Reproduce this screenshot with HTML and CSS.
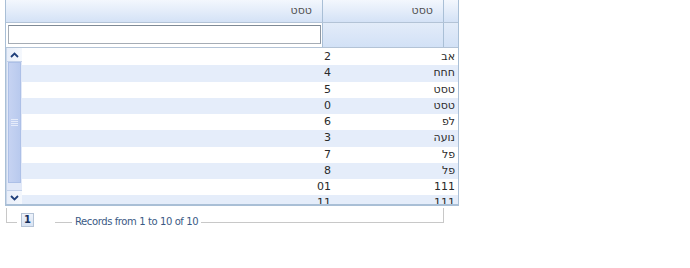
FILE: index.html
```html
<!DOCTYPE html>
<html lang="he">
<head>
    <meta charset="UTF-8">
    <title>טבלה</title>
    <link rel="stylesheet" href="styles.css">
</head>
<body>

<div class="grid" dir="rtl">
    <!-- כותרות -->
    <div class="hrow">
        <div class="hcell pad"></div>
        <div class="hcell c1">טסט</div>
        <div class="hcell c2">טסט</div>
    </div>
    <!-- שורת סינון -->
    <div class="frow">
        <div class="fcell pad"></div>
        <div class="fcell c1"></div>
        <div class="fcell c2"><input type="text" class="filter-input"></div>
    </div>

    <div class="grid-body">
        <div class="rows">
            <div class="row"><div class="cell c1">אב</div><div class="cell c2">2</div></div>
            <div class="row alt"><div class="cell c1">חחח</div><div class="cell c2">4</div></div>
            <div class="row"><div class="cell c1">טסט</div><div class="cell c2">5</div></div>
            <div class="row alt"><div class="cell c1">טסט</div><div class="cell c2">0</div></div>
            <div class="row"><div class="cell c1">לפ</div><div class="cell c2">6</div></div>
            <div class="row alt"><div class="cell c1">נועה</div><div class="cell c2">3</div></div>
            <div class="row"><div class="cell c1">פל</div><div class="cell c2">7</div></div>
            <div class="row alt"><div class="cell c1">פל</div><div class="cell c2">8</div></div>
            <div class="row"><div class="cell c1">111</div><div class="cell c2">01</div></div>
            <div class="row alt"><div class="cell c1">111</div><div class="cell c2">11</div></div>
        </div>
        <div class="vscroll">
            <div class="sbtn">
                <svg width="9" height="6" viewBox="0 0 9 6"><path d="M1 5 L4.5 1.5 L8 5" fill="none" stroke="#1f3f7a" stroke-width="1.8"/></svg>
            </div>
            <div class="thumb"><span class="grip"></span></div>
            <div class="track"></div>
            <div class="sbtn">
                <svg width="9" height="6" viewBox="0 0 9 6"><path d="M1 1 L4.5 4.5 L8 1" fill="none" stroke="#1f3f7a" stroke-width="1.8"/></svg>
            </div>
        </div>
    </div>
</div>

<div class="pager">
    <div class="cap-left"></div>
    <div class="page-btn">1</div>
    <div class="line short"></div>
    <div class="pager-text">Records from 1 to 10 of 10</div>
    <div class="line long"></div>
    <div class="cap-right"></div>
</div>

</body>
</html>
```

FILE: styles.css
```css
body {
    margin: 0;
    background-color: #fff;
    font-family: "DejaVu Sans", Tahoma, sans-serif;
    font-size: 11px;
}
.grid {
    width: 452px;
    margin-left: 5px;
    border: 1px solid #a9bfd6;
    border-top: none;
    background-color: #fff;
}
.hrow, .frow, .row {
    display: flex;
}
.hrow {
    height: 22px;
    background: linear-gradient(#f3f7fd, #d4e2f6);
    border-bottom: 1px solid #b3c3d6;
}
.hcell {
    box-sizing: border-box;
    color: #505050;
    line-height: 22px;
    padding-right: 10px;
    border-left: 1px solid #a9bfd6;
}
.pad {
    width: 15px;
    padding: 0;
}
.c1 {
    width: 121px;
    flex: 0 0 auto;
}
.c2 {
    flex: 1;
}
.hcell.c2 {
    border-left: none;
}
.frow {
    height: 24px;
    border-bottom: 1px solid #b3c3d6;
}
.fcell {
    box-sizing: border-box;
    background: linear-gradient(#e3ecf9, #d2e1f6);
    border-left: 1px solid #a9bfd6;
}
.fcell.c2 {
    background: #fff;
    border-left: none;
    padding: 2px 1px 0 2px;
}
.filter-input {
    box-sizing: border-box;
    width: 100%;
    height: 19px;
    margin: 0;
    border: 1px solid #a5acb5;
    border-top-color: #7f8a96;
    border-right-color: #8d97a3;
    background: #fff;
}
.grid-body {
    display: flex;
    height: 156px;
    overflow: hidden;
    border-bottom: 1px solid #a9bfd6;
}
.rows {
    flex: 1;
    padding-top: 1px;
}
.row {
    height: 16.25px;
    line-height: 16px;
    color: #2a2a2a;
}
.row.alt {
    background-color: #e5edfa;
}
.cell.c1 {
    padding-right: 3px;
    box-sizing: border-box;
}
.cell.c2 {
    padding-right: 6px;
}
.vscroll {
    width: 15px;
    display: flex;
    flex-direction: column;
    background-color: #e2e9f8;
    border-left: 1px solid #c9d6ea;
}
.sbtn {
    height: 13px;
    display: flex;
    align-items: center;
    justify-content: center;
    background: linear-gradient(90deg, #e8eef9, #f5f8fd);
    border-bottom: 1px solid #c3d1ea;
}
.sbtn:last-child {
    border-bottom: none;
    border-top: 1px solid #c3d1ea;
}
.thumb {
    height: 119px;
    margin: 0 1px;
    background: linear-gradient(90deg, #c6d3f2, #b9caee);
    border: 1px solid #adc0e7;
    display: flex;
    align-items: center;
    justify-content: center;
}
.grip {
    width: 7px;
    height: 8px;
    background: repeating-linear-gradient(#e6ecfa 0, #e6ecfa 1px, transparent 1px, transparent 2px);
}
.track {
    flex: 1;
}
.pager {
    display: flex;
    align-items: flex-start;
    width: 438px;
    height: 28px;
    margin: 2px 0 0 6px;
}
.cap-left {
    width: 10px;
    height: 14px;
    border-left: 1px solid #c8c8c8;
    border-bottom: 1px solid #c8c8c8;
}
.page-btn {
    width: 11px;
    height: 12px;
    margin: 5px 0 0 4px;
    border: 1px solid #b5c3d6;
    background: linear-gradient(#eef3fb, #d8e3f3);
    color: #15305c;
    font-weight: bold;
    font-size: 10px;
    line-height: 12px;
    text-align: center;
}
.line {
    height: 1px;
    margin-top: 14px;
    background-color: #c8c8c8;
}
.line.short {
    width: 17px;
    margin-left: 21px;
}
.line.long {
    flex: 1;
    margin-left: 3px;
}
.pager-text {
    margin: 8px 0 0 3px;
    color: #3b5a85;
    font-size: 10px;
    line-height: 12px;
    letter-spacing: -0.4px;
    white-space: nowrap;
}
.cap-right {
    width: 0;
    height: 15px;
    border-right: 1px solid #c8c8c8;
}
```
